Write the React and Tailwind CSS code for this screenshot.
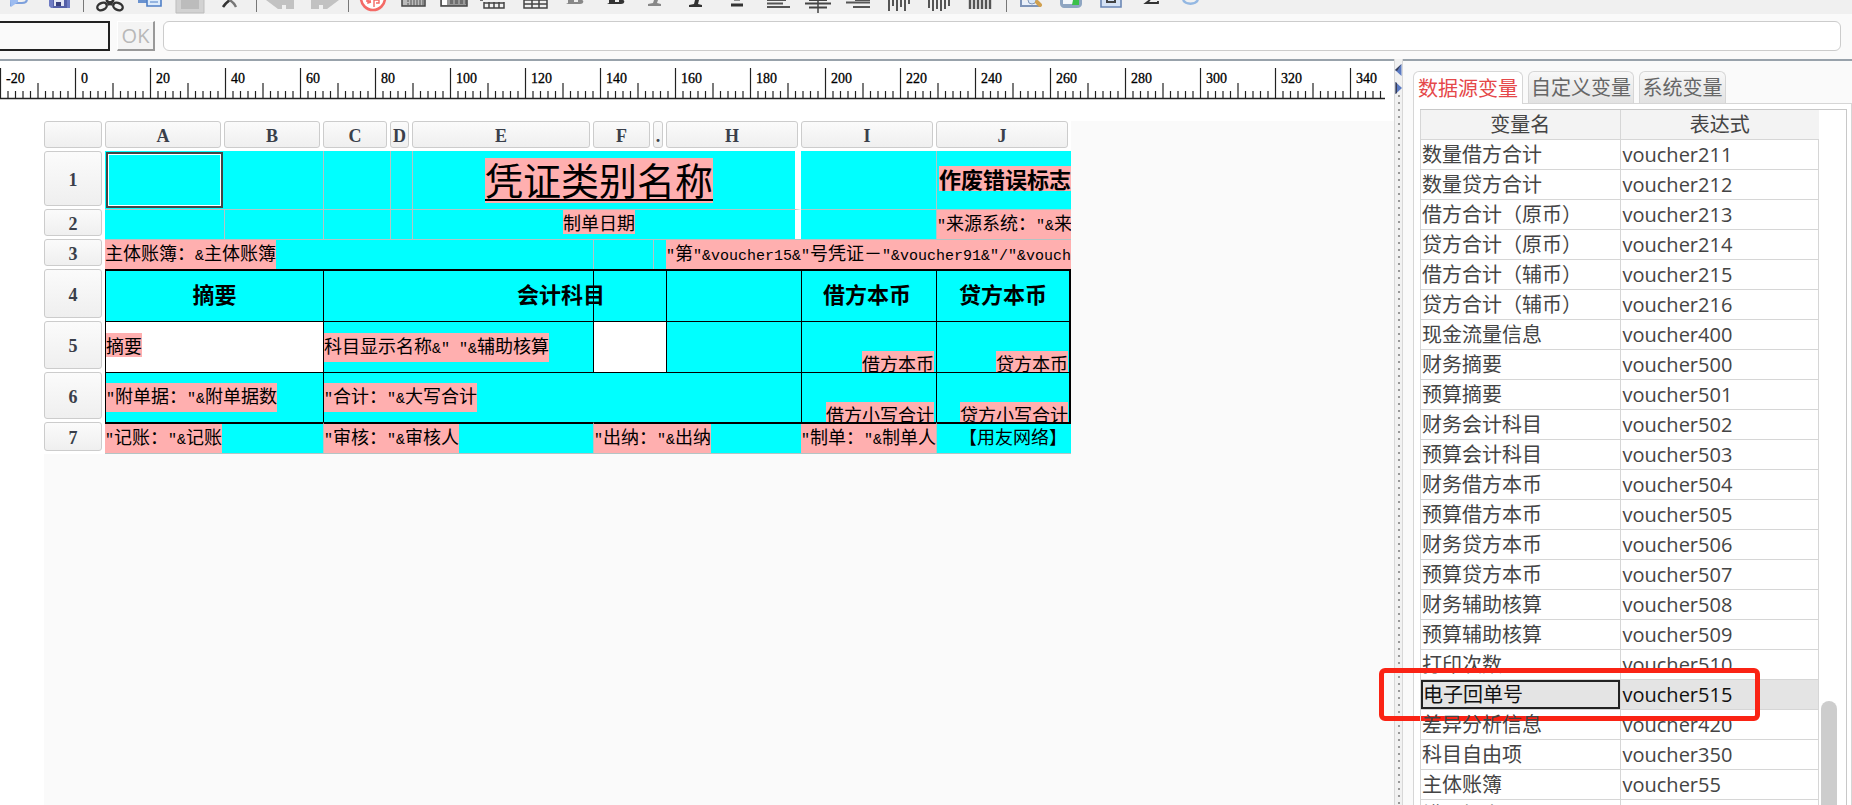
import { useState } from 'react';

const variables = [
  ['数量借方合计', 'voucher211'],
  ['数量贷方合计', 'voucher212'],
  ['借方合计（原币）', 'voucher213'],
  ['贷方合计（原币）', 'voucher214'],
  ['借方合计（辅币）', 'voucher215'],
  ['贷方合计（辅币）', 'voucher216'],
  ['现金流量信息', 'voucher400'],
  ['财务摘要', 'voucher500'],
  ['预算摘要', 'voucher501'],
  ['财务会计科目', 'voucher502'],
  ['预算会计科目', 'voucher503'],
  ['财务借方本币', 'voucher504'],
  ['预算借方本币', 'voucher505'],
  ['财务贷方本币', 'voucher506'],
  ['预算贷方本币', 'voucher507'],
  ['财务辅助核算', 'voucher508'],
  ['预算辅助核算', 'voucher509'],
  ['打印次数', 'voucher510'],
  ['电子回单号', 'voucher515'],
  ['差异分析信息', 'voucher420'],
  ['科目自由项', 'voucher350'],
  ['主体账簿', 'voucher55'],
  ['错误标志', 'voucher56'],
];

const tabs = [
  { name: '数据源变量', width: 'w-[110px]' },
  { name: '自定义变量', width: 'w-[106px]' },
  { name: '系统变量', width: 'w-[87px]' },
];

/* ---------- toolbar ---------- */

// icons are 30x14, only their lower part shows above the bar's edge
function Icon({ children }) {
  return <svg width="30" height="14" viewBox="0 0 30 14" fill="none">{children}</svg>;
}

const fileIcons = [
  ['撤回', <Icon><path d="M6 0v5l3-2h8c3 0 5-1 5-4" stroke="#7da0dc" strokeWidth="2" /><path d="M5 0h8v2l-7 5z" fill="#9dbcf0" /></Icon>],
  ['保存', <Icon><path d="M5 0h21v8H7L5 6z" fill="#6f7cc4" /><path d="M9 0h14v8H9z" fill="#5560a8" /><path d="M10 0h10v6H10z" fill="#e4e6f5" /><path d="M12 2h5v4h-5z" fill="#39407f" /></Icon>],
];

const editIcons = [
  ['剪切', <Icon><g stroke="#333" strokeWidth="2.4"><path d="M19 0l-6 5M11 0l6 5" /><ellipse cx="7" cy="6.500" rx="5" ry="3.500" transform="rotate(-25 7 6.500)" /><ellipse cx="23" cy="6.500" rx="5" ry="3.500" transform="rotate(25 23 6.500)" /></g><path d="M11 1h8l-2 4h-4z" fill="#333" /></Icon>],
  ['复制', <Icon><path d="M3 0h10v3H3z" fill="#6a92cf" /><path d="M12-2h14v8H12z" fill="#dcebfb" stroke="#4f7fc6" strokeWidth="1.6" /><path d="M15 2h8" stroke="#4f7fc6" /></Icon>],
  ['粘贴', <Icon><path d="M1-1h28v14H1z" fill="#d2d2d2" stroke="#bdbdbd" /><path d="M6 0h18v9H6z" fill="#bcbcbc" /></Icon>],
  ['删除', <Icon><path d="M15 0c-3 2-5 4-7 7" stroke="#333" strokeWidth="2.6" /><path d="M14 0c3 1 5 3 7 7" stroke="#777" strokeWidth="2.4" /></Icon>],
];

const historyIcons = [
  ['撤销', <Icon><path d="M1 0h28v9h-8V5h-4v4h-4z" fill="#c2c2c2" /></Icon>],
  ['重做', <Icon><path d="M29 0H1v9h8V5h4v4h4z" fill="#c2c2c2" /></Icon>],
];

const formatIcons = [
  ['打印设置', <Icon><circle cx="15" cy="-2" r="12" fill="#fff" stroke="#f46a66" strokeWidth="2.6" /><path d="M8 1h5M10-1v4l3-1M16 0v7M16 0h5v3h-3" stroke="#f46a66" strokeWidth="1.4" /></Icon>],
  ['合并单元格', <Icon><path d="M3-1h23v7H3z" fill="#bbb" stroke="#444" strokeWidth="1.5" /><path d="M9 0v6M11 1h14M11 3h14M11 5h14" stroke="#555" strokeDasharray="2 1" /></Icon>],
  ['拆分单元格', <Icon><path d="M2-1h26v7H2z" fill="#999" stroke="#444" strokeWidth="1.5" /><path d="M3 0h5v5H3z" fill="#fff" /><path d="M11 1h16M11 3h16" stroke="#444" strokeDasharray="3 2" /></Icon>],
  ['插入列', <Icon><path d="M4 2v6h20V2M4 3h20M9 2v6M14 2v6M19 2v6M0 0h3" stroke="#444" strokeWidth="1.5" /></Icon>],
  ['边框', <Icon><path d="M4 0v8h23V0M4 4h23M12 0v8M19 0v8M4 0h23" stroke="#444" strokeWidth="1.5" /></Icon>],
  ['取消加粗', <Icon><path d="M6 4l2-1V0h14c2 0 2 4-2 4z" fill="#888" /><path d="M14 0h4v2h-4z" fill="#eee" /></Icon>],
  ['加粗', <Icon><path d="M6 4l2-1V0h14c2 0 2 4-2 4z" fill="#333" /><path d="M14 0h4v2h-4z" fill="#eee" /></Icon>],
  ['取消斜体', <Icon><path d="M13 0h4l-1 3 4 1v2H7V4l5-1z" fill="#888" /></Icon>],
  ['斜体', <Icon><path d="M13 0h4l-1 4 4 1v2H7V5l5-1z" fill="#333" /></Icon>],
  ['下划线', <Icon><path d="M12 0h6" stroke="#333" /><path d="M9 5h12" stroke="#333" strokeWidth="3" /></Icon>],
  ['左对齐', <Icon><path d="M4 0h19M4 3.500h16M4 7h23" stroke="#555" strokeWidth="2" /></Icon>],
  ['居中对齐', <Icon><path d="M2 3.500h26M6 7.500h18M6 0h18" stroke="#444" strokeWidth="2" /><path d="M15 0v13" stroke="#444" strokeWidth="1.5" /></Icon>],
  ['右对齐', <Icon><path d="M3 2.500h24M10 7h17M12 0h15" stroke="#555" strokeWidth="2" /></Icon>],
  ['顶端对齐', <Icon><path d="M5 0v11M9 0v6M13 0v11M17 0v7M21 0v11M25 0v4" stroke="#555" strokeWidth="2" /></Icon>],
  ['垂直居中', <Icon><path d="M5 0v8M9 0v11M13 0v9M17 0v11M21 0v9M25 0v6" stroke="#555" strokeWidth="2" /></Icon>],
  ['底端对齐', <Icon><path d="M5 0v9M9 0v9M13 0v9M17 0v9M21 0v9M25 0v9" stroke="#555" strokeWidth="2.400" /></Icon>],
];

const viewIcons = [
  ['预览', <Icon><path d="M5 0v6h19" stroke="#7e94b8" strokeWidth="2" fill="#e9f0fa" /><circle cx="16" cy="0" r="4" fill="#d7e7fa" stroke="#8296b6" /><path d="M21 2l3 3" stroke="#d0a050" strokeWidth="4" strokeLinecap="round" /></Icon>],
  ['打印', <Icon><path d="M4 0h22v4c0 2-2 4-5 4H8C6 8 4 6 4 4z" fill="#8fa6c2" /><path d="M7 0h10v4H7z" fill="#f3f7fb" /><path d="M17 0h6v5h-7z" fill="#3ac04a" /></Icon>],
  ['页面设置', <Icon><path d="M5-1h20v8H5z" fill="#d5e2f5" stroke="#6b87b5" strokeWidth="1.600" /><path d="M11 0v2h8V0" stroke="#444" strokeWidth="2" /></Icon>],
  ['求和', <Icon><path d="M14 0l-4 3h12V1" stroke="#333" strokeWidth="1.800" /></Icon>],
  ['刷新', <Icon><path d="M7 0c3 5 12 5 15 0" stroke="#94b8e2" strokeWidth="2.400" /></Icon>],
];

function ToolGroup({ icons, className }) {
  return (
    <div className={`flex shrink-0 ${className}`}>
      {icons.map(([name, icon]) => (
        <button key={name} type="button" aria-label={name} className="flex flex-1 justify-center">
          {icon}
        </button>
      ))}
    </div>
  );
}

function Divider() {
  return <div className="h-3 w-px shrink-0 bg-[#777]" />;
}

/* ---------- ruler ---------- */

function Ruler() {
  const ticks = Array.from({ length: 185 }, (_, i) => i);
  return (
    <div className="h-[60px] overflow-hidden bg-white pt-[7px]">
      <svg width="1386" height="32" className="block">
        {ticks.map(i => {
          const x = i * 7.5 + 0.5;
          const top = i % 10 === 0 ? 0 : i % 5 === 0 ? 15 : 23;
          return <path key={i} d={`M${x} ${top}V30`} stroke="#222" strokeWidth="1.2" />;
        })}
        <path d="M0 30.500H1385" stroke="#222" strokeWidth="1.5" />
        {ticks.filter(i => i % 10 === 0).map(i => (
          <text key={i} x={i * 7.5 + 6} y="15" fontSize="14" fill="#000" stroke="#000" strokeWidth="0.3"
            fontFamily="'Liberation Serif', serif">
            {i * 2 - 20}
          </text>
        ))}
      </svg>
    </div>
  );
}

/* ---------- sheet ---------- */

// half-width runs are set in the mono face so they take half a CJK cell each
function Mixed({ text }) {
  return text.split(/([\x20-\x7e]+)/).map((part, i) =>
    i % 2 ? <span key={i} className="font-['Liberation_Mono',monospace] text-[15px] whitespace-pre">{part}</span> : part
  );
}

function Field({ text, className = 'text-lg leading-6' }) {
  return (
    <span className={`inline-block whitespace-nowrap bg-[#ffafaf] align-top ${className}`}>
      <Mixed text={text} />
    </span>
  );
}

function HeadBox({ children }) {
  return (
    <div className="flex h-full items-center justify-center overflow-hidden rounded-[3px] border border-[#ccc] bg-linear-to-b from-[#fbfbfb] to-[#efefef] pt-0.5 font-['Liberation_Serif',serif] text-lg leading-5 font-bold text-[#3a3f4a]">
      {children}
    </div>
  );
}

function RowHead({ n, className }) {
  return (
    <th scope="row" className={`bg-white p-0 pr-[3px] pb-[3px] ${className}`}>
      <HeadBox>{n}</HeadBox>
    </th>
  );
}

const light = 'border-[#b4c4c4]';

function Sheet() {
  return (
    <table className="w-[1027px] table-fixed border-separate border-spacing-0 bg-[#00ffff] text-lg leading-6 text-black">
      <colgroup>
        <col className="w-[61px]" />
        <col className="w-[119px]" />
        <col className="w-[99px]" />
        <col className="w-[67px]" />
        <col className="w-[22px]" />
        <col className="w-[181px]" />
        <col className="w-[60px]" />
        <col className="w-[13px]" />
        <col className="w-[135px]" />
        <col className="w-[135px]" />
        <col className="w-[135px]" />
      </colgroup>
      <thead>
        <tr>
          {['', 'A', 'B', 'C', 'D', 'E', 'F', '.', 'H', 'I', 'J'].map((c, i) => (
            <th key={i} scope="col" className="h-[30px] bg-white p-0 pr-[3px] pb-[3px]"><HeadBox>{c}</HeadBox></th>
          ))}
        </tr>
      </thead>
      <tbody>
        <tr>
          <RowHead n="1" className="h-[58px]" />
          <td className="h-[58px] p-px">
            <div className="h-full border-2 border-[#444] shadow-[inset_0_0_0_1px_#fff]" />
          </td>
          <td className="p-0" />
          <td className={`border-l p-0 ${light}`} />
          <td className={`border-l p-0 ${light}`} />
          <td colSpan="4" className="border-r-[6px] border-l border-l-[#b4c4c4] border-r-white p-0 pr-2.5 text-center">
            <Field text="凭证类别名称" className="pb-1 text-[38px] leading-[41px] underline decoration-2 underline-offset-4" />
          </td>
          <td className="p-0" />
          <td className={`border-l p-0 pb-1 text-right ${light}`}>
            <Field text="作废错误标志" className="text-[22px] leading-[25px] font-bold" />
          </td>
        </tr>
        <tr>
          <RowHead n="2" className="h-[30px]" />
          <td className={`h-[30px] border-t p-0 ${light}`} />
          <td className={`border-t border-l p-0 ${light}`} />
          <td className={`border-t border-l p-0 ${light}`} />
          <td className={`border-t border-l p-0 ${light}`} />
          <td colSpan="4" className="border-t border-r-[6px] border-l border-t-[#b4c4c4] border-r-white border-l-[#b4c4c4] p-0 pr-2.5 text-center align-top">
            <Field text="制单日期" />
          </td>
          <td className={`border-t p-0 ${light}`} />
          <td className={`overflow-hidden border-t border-l p-0 align-top ${light}`}>
            <Field text={'"来源系统："&来'} />
          </td>
        </tr>
        <tr>
          <RowHead n="3" className="h-[29px]" />
          <td colSpan="5" className={`h-[29px] border-t p-0 align-top ${light}`}><Field text="主体账簿：&主体账簿" /></td>
          <td className={`border-t border-l p-0 ${light}`} />
          <td className={`border-t border-l p-0 ${light}`} />
          <td colSpan="3" className={`overflow-hidden border-t p-0 align-top ${light}`}>
            <Field text={'"第"&voucher15&"号凭证－"&voucher91&"/"&vouch'} />
          </td>
        </tr>
        <tr className="text-[22px] font-bold">
          <RowHead n="4" className="h-[52px]" />
          <td colSpan="2" className="h-[52px] border-t-2 border-l border-black p-0 pb-1.5 text-center">摘要</td>
          <td colSpan="3" className="relative border-t-2 border-l border-black p-0">
            {/* the heading runs across the F and H cells too */}
            <span className="absolute inset-y-0 left-0 flex w-[474px] items-center justify-center pb-1.5">会计科目</span>
          </td>
          <td colSpan="2" className="border-t-2 border-l border-black p-0" />
          <td className="border-t-2 border-l border-black p-0" />
          <td className="border-t-2 border-l border-black p-0 pr-1 pb-1.5 text-center">借方本币</td>
          <td className="border-t-2 border-r-2 border-l border-black p-0 pb-1.5 text-center">贷方本币</td>
        </tr>
        <tr>
          <RowHead n="5" className="h-[51px]" />
          <td colSpan="2" className="h-[51px] border-t border-l border-black bg-white p-0 pb-1"><Field text="摘要" /></td>
          <td colSpan="3" className="border-t border-l border-black p-0"><Field text={'科目显示名称&" "&辅助核算'} /></td>
          <td colSpan="2" className="border-t border-l border-black bg-white p-0" />
          <td className="border-t border-l border-black p-0" />
          <td className="border-t border-l border-black p-0 pr-0.5 text-right align-bottom">
            <div className="h-[21px] overflow-hidden"><Field text="借方本币" /></div>
          </td>
          <td className="border-t border-r-2 border-l border-black p-0 pr-px text-right align-bottom">
            <div className="h-[21px] overflow-hidden"><Field text="贷方本币" /></div>
          </td>
        </tr>
        <tr>
          <RowHead n="6" className="h-[50px]" />
          <td colSpan="2" className="h-[50px] border-t border-l border-black p-0"><Field text={'"附单据："&附单据数'} /></td>
          <td colSpan="6" className="border-t border-l border-black p-0"><Field text={'"合计："&大写合计'} /></td>
          <td className="border-t border-l border-black p-0 pr-0.5 text-right align-bottom">
            <div className="h-5 overflow-hidden"><Field text="借方小写合计" /></div>
          </td>
          <td className="border-t border-r-2 border-l border-black p-0 pr-px text-right align-bottom">
            <div className="h-5 overflow-hidden"><Field text="贷方小写合计" /></div>
          </td>
        </tr>
        <tr>
          <RowHead n="7" className="h-[31px]" />
          <td colSpan="2" className="h-[31px] border-t-2 border-b border-t-black border-b-[#b4c4c4] p-0 align-top"><Field text={'"记账："&记账'} /></td>
          <td colSpan="3" className="border-t-2 border-b border-l border-t-black border-b-[#b4c4c4] border-l-[#b4c4c4] p-0 align-top"><Field text={'"审核："&审核人'} /></td>
          <td colSpan="3" className="border-t-2 border-b border-l border-t-black border-b-[#b4c4c4] border-l-[#b4c4c4] p-0 align-top"><Field text={'"出纳："&出纳'} /></td>
          <td className="overflow-hidden border-t-2 border-b border-t-black border-b-[#b4c4c4] p-0 align-top"><Field text={'"制单："&制单人'} /></td>
          <td className="border-t-2 border-b border-l border-t-black border-b-[#b4c4c4] border-l-[#b4c4c4] p-0 pr-1 text-right align-top whitespace-nowrap">【用友网络】</td>
        </tr>
      </tbody>
    </table>
  );
}

/* ---------- right side ---------- */

function Splitter() {
  return (
    <div className="flex w-[9px] shrink-0 flex-col items-center border-x border-[#d8d8d8] bg-[#f1f1f1] pt-1">
      <svg width="7" height="32" viewBox="0 0 7 32" className="shrink-0">
        <path d="M6.500 1v12L0 7z" fill="#5b7ac2" />
        <path d="M.5 19v12L7 25z" fill="#5b7ac2" />
        <path d="M6.500 1L0 7l2 1zM.5 19v12l1.500-1V20z" fill="#3a3f55" />
      </svg>
      <div className="w-[2px] flex-1 bg-[linear-gradient(#999_2px,transparent_2px)] bg-[length:2px_7px]" />
    </div>
  );
}

function VariablePanel() {
  const [tab, setTab] = useState('数据源变量');
  const [selected, setSelected] = useState('voucher515');

  return (
    <aside className="flex w-[449px] shrink-0 flex-col border-t-2 border-[#98a2ab] bg-[#fafafa] pt-2.5 pl-2.5 font-['Open_Sans','Noto_Sans_CJK_SC',sans-serif] text-xl">
      <div role="tablist" className="flex gap-[5px]">
        {tabs.map(t => (
          <button key={t.name} type="button" role="tab" aria-selected={tab === t.name}
            onClick={() => setTab(t.name)}
            className={`h-8 shrink-0 rounded-t-md border border-b-0 border-[#d6d6d6] leading-[30px] whitespace-nowrap ${t.width} ${
              tab === t.name
                ? 'relative -mb-px h-[33px] bg-white pt-0.5 text-[#e5484a]'
                : 'bg-linear-to-b from-[#f8f8f8] to-[#e2e2e2] text-[#666]'
            }`}>
            {t.name}
          </button>
        ))}
      </div>
      <div className="flex min-h-0 flex-1 flex-col border-x border-t border-[#d6d6d6] bg-white pt-[5px] pr-1 pl-1.5">
        <div className="flex min-h-0 flex-1 items-start border-t border-r border-[#c8c8c8]">
          <table className="w-[399px] shrink-0 table-fixed border-separate border-spacing-0 leading-7 text-[#444]">
            <thead>
              <tr className="bg-[#f3f3f3]">
                <th scope="col" className="h-[30px] border-b border-l border-[#d6d6d6] p-0 font-normal">变量名</th>
                <th scope="col" className="border-b border-l border-[#d6d6d6] p-0 font-normal">表达式</th>
              </tr>
            </thead>
            <tbody>
              {variables.map(([name, code]) => (
                <tr key={code} onClick={() => setSelected(code)}
                  className={selected === code ? 'bg-[#e4e4e4] text-[#111]' : 'bg-white'}>
                  <td className="relative h-[30px] border-b border-l border-[#d6d6d6] p-0 whitespace-nowrap">
                    {selected === code ? (
                      <div className="border-2 border-[#222] leading-[25px]">{name}</div>
                    ) : (
                      <div className="pl-px">{name}</div>
                    )}
                    {code === 'voucher515' && (
                      <div className="pointer-events-none absolute -top-3 -left-[42px] h-[53px] w-[381px] rounded-md border-[5px] border-[#fa2314]" />
                    )}
                  </td>
                  <td className="h-[30px] border-r border-b border-l border-[#d6d6d6] p-0 pl-0.5">{code}</td>
                </tr>
              ))}
            </tbody>
          </table>
          <div className="flex h-full flex-1 flex-col items-start justify-end pl-0.5">
            <div className="h-[15%] w-4 rounded-t-lg bg-[#cdcdcd]" />
          </div>
        </div>
      </div>
    </aside>
  );
}

export default function App() {
  return (
    <div className="flex h-screen flex-col overflow-hidden bg-[#fafafa] font-['Noto_Sans_CJK_SC',sans-serif]">
      <div role="toolbar" className="flex h-3.5 shrink-0 overflow-hidden bg-[#f0f0f0]">
        <ToolGroup icons={fileIcons} className="w-[83px] pr-1" />
        <Divider />
        <ToolGroup icons={editIcons} className="w-[172px] px-1.5" />
        <Divider />
        <ToolGroup icons={historyIcons} className="w-[91px]" />
        <Divider />
        <ToolGroup icons={formatIcons} className="w-[657px] pr-1.5 pl-1" />
        <Divider />
        <ToolGroup icons={viewIcons} className="w-[204px] pl-1" />
      </div>

      <div className="flex shrink-0 pt-[7px] pr-[11px] pb-2">
        <input aria-label="单元格" className="h-[30px] w-[110px] border-2 border-l-0 border-[#222] bg-[#fafafa]" />
        <button type="button" disabled
          className="ml-[7px] h-[30px] w-[38px] border-t border-r-2 border-b-2 border-l border-t-white border-r-[#999] border-b-[#999] border-l-white bg-[#f4f4f4] font-['Open_Sans',sans-serif] text-xl leading-6 text-[#b8b8b8]">
          OK
        </button>
        <input aria-label="公式" className="ml-2 h-[30px] min-w-0 flex-1 rounded-md border border-[#ccc] bg-white px-2" />
      </div>

      <div className="flex min-h-0 flex-1">
        <main className="flex min-w-0 flex-1 flex-col overflow-hidden border-t-2 border-[#98a2ab]">
          <Ruler />
          <div className="flex min-h-0 flex-1">
            <div className="w-11 shrink-0 bg-white" />
            <div className="min-w-0 flex-1">
              <Sheet />
            </div>
          </div>
        </main>
        <Splitter />
        <VariablePanel />
      </div>
    </div>
  );
}
